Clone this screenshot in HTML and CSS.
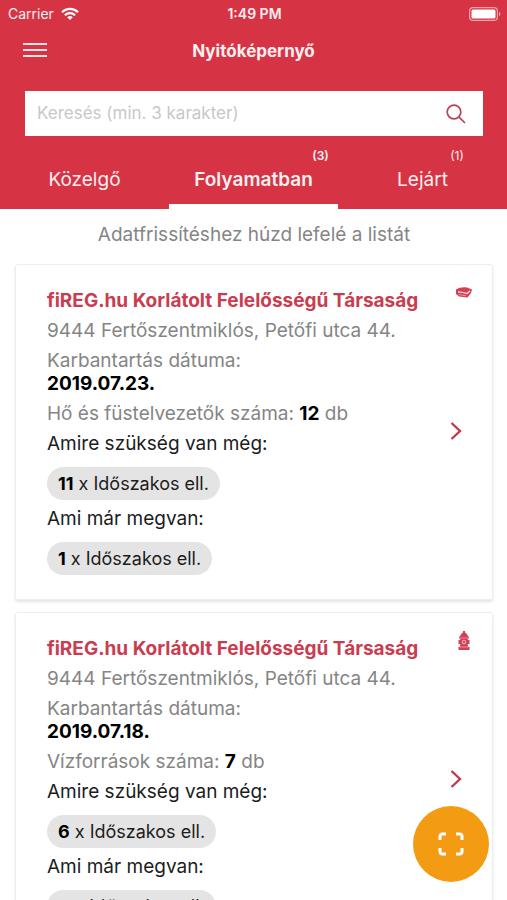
FILE: index.html
```html
<!DOCTYPE html>
<html lang="hu">
<head>
<meta charset="utf-8">
<meta name="viewport" content="width=device-width, initial-scale=1">
<title>Nyitóképernyő</title>
<link rel="stylesheet" href="styles.css">
</head>
<body>
<header class="header">
  <div class="status">
    <span class="carrier">Carrier
      <svg class="wifi" width="18" height="14" viewBox="0 0 18 14" fill="none" stroke="#fff" stroke-width="2.2"><path d="M1 5.2a11.4 11.4 0 0 1 16 0M3.9 8.2a7.3 7.3 0 0 1 10.200 0"/><path d="M9 13 6.200 10.300a4 4 0 0 1 5.600 0z" fill="#fff" stroke="none"/></svg>
    </span>
    <span class="time">1:49 PM</span>
    <svg class="battery" width="32" height="14" viewBox="0 0 32 14"><rect x=".6" y=".6" width="27.800" height="12.800" rx="3.500" fill="none" stroke="#f0a3aa" stroke-width="1.200"/><rect x="2.500" y="2.500" width="24" height="9" rx="1.500" fill="#fff"/><path d="M30 5v4q1.500-.6 1.500-2T30 5z" fill="#f0a3aa"/></svg>
  </div>
  <div class="navbar">
    <button class="icon-button" type="button" aria-label="Menü"><svg width="24" height="16" viewBox="0 0 24 16" stroke="#fbe3e5" stroke-width="2"><path d="M0 1h24M0 7h24M0 13h24"/></svg></button>
    <h1 class="title">Nyitóképernyő</h1>
  </div>
  <form class="search">
    <input class="search-input" type="text" placeholder="Keresés (min. 3 karakter)" aria-label="Keresés">
    <button class="icon-button" type="button" aria-label="Keresés indítása"><svg width="20" height="20" viewBox="0 0 20 20" fill="none" stroke="#b84358" stroke-width="1.700"><circle cx="8" cy="8" r="6.800"/><path d="m12.800 12.800 6.200 6.200"/></svg></button>
  </form>
  <nav class="tabs">
    <a class="tab" href="#kozelgo"><span class="tab-label">Közelgő</span></a>
    <a class="tab tab-active" href="#folyamatban"><span class="tab-label">Folyamatban<span class="count">(3)</span></span></a>
    <a class="tab" href="#lejart"><span class="tab-label">Lejárt<span class="count">(1)</span></span></a>
  </nav>
</header>
<main class="list">
  <p class="hint">Adatfrissítéshez húzd lefelé a listát</p>
  <article class="card">
    <div class="info">
      <h2 class="name">fiREG.hu Korlátolt Felelősségű Társaság</h2>
      <p class="muted">9444 Fertőszentmiklós, Petőfi utca 44.</p>
      <div class="muted">Karbantartás dátuma:<br><b>2019.07.23.</b></div>
      <p class="muted">Hő és füstelvezetők száma: <b>12</b> db</p>
      <p>Amire szükség van még:</p>
      <span class="pill"><b>11</b> x Időszakos ell.</span>
      <p>Ami már megvan:</p>
      <span class="pill"><b>1</b> x Időszakos ell.</span>
    </div>
    <div class="side">
      <svg class="type" width="18" height="20" viewBox="0 0 18 20"><path d="M1 6.500Q5 3.800 12 4.500L17 6.500 16 10 12.500 14.500 4 13.500 1 11z" fill="#d43f53"/><path d="M3 8.800 8 9.500 12 10.500 15 8" fill="none" stroke="#fbe6e8" stroke-width="1.200"/><path d="M3.500 11.500 11 12.800" fill="none" stroke="#eda8b1" stroke-width=".8"/></svg>
      <a class="open" href="#1" aria-label="Megnyitás"><svg width="12" height="20" viewBox="0 0 12 20" fill="none" stroke="#bd3b50" stroke-width="2.400"><path d="m1.500 2 8.500 8-8.500 8"/></svg></a>
    </div>
  </article>
  <article class="card">
    <div class="info">
      <h2 class="name">fiREG.hu Korlátolt Felelősségű Társaság</h2>
      <p class="muted">9444 Fertőszentmiklós, Petőfi utca 44.</p>
      <div class="muted">Karbantartás dátuma:<br><b>2019.07.18.</b></div>
      <p class="muted">Vízforrások száma: <b>7</b> db</p>
      <p>Amire szükség van még:</p>
      <span class="pill"><b>6</b> x Időszakos ell.</span>
      <p>Ami már megvan:</p>
      <span class="pill"><b>2</b> x Időszakos ell.</span>
    </div>
    <div class="side">
      <svg class="type" width="18" height="20" viewBox="0 0 18 20" fill="#d43f53"><path d="M8 0h2v1.500Q12.500 2.500 13 5.500h.8V7.500H12.800V9H14.500v4h-1.700v3H14.500V19H3.500V16H5.200V13H3.500V9H5.200V7.500H4.200V5.500H5Q5.500 2.500 8 1.500z"/><circle cx="9" cy="11" r="1.800" fill="none" stroke="#f6c5cb" stroke-width="1"/><path d="M5.200 7h7.600M5.200 16h7.600" stroke="#f0a3aa" stroke-width=".8"/></svg>
      <a class="open" href="#2" aria-label="Megnyitás"><svg width="12" height="20" viewBox="0 0 12 20" fill="none" stroke="#bd3b50" stroke-width="2.400"><path d="m1.500 2 8.500 8-8.500 8"/></svg></a>
    </div>
  </article>
</main>
<button class="scan" type="button" aria-label="Beolvasás"><svg width="26" height="24" viewBox="0 0 26 24" fill="none" stroke="#fff" stroke-width="3"><path d="M2 8V4.500Q2 2 4.500 2H8M18 2h3.500Q24 2 24 4.500V8M24 16v3.500Q24 22 21.500 22H18M8 22H4.500Q2 22 2 19.500V16"/></svg></button>
</body>
</html>
```
FILE: styles.css
```css
* { box-sizing: border-box; }

body {
  margin: 0;
  height: 100vh;
  display: flex;
  flex-direction: column;
  overflow: hidden;
  background: #fff;
  color: #1c1c1c;
  font: 19px/23px Inter, "Liberation Sans", sans-serif;
}

h1, h2, p { margin: 0; }
b { color: #000; }

.header {
  flex: none;
  background: #d63445;
  color: #fdeff0;
}

.status {
  display: grid;
  grid-template-columns: 1fr auto 1fr;
  align-items: center;
  height: 27px;
  padding: 0 6px 0 8px;
  font-size: 14px;
}
.carrier { display: flex; align-items: center; gap: 7px; }
.time { font-weight: 600; }
.battery { justify-self: end; }

.navbar {
  display: grid;
  grid-template-columns: 1fr auto 1fr;
  align-items: center;
  height: 48px;
  padding: 0 23px;
}
.title { font-size: 17px; font-weight: 700; }

.icon-button {
  display: flex;
  padding: 0;
  border: 0;
  background: none;
  cursor: pointer;
}

.search {
  display: flex;
  align-items: center;
  height: 45px;
  margin: 16px 24px 0 25px;
  padding: 0 17px 0 12px;
  background: #fff;
}
.search-input {
  flex: 1;
  min-width: 0;
  padding: 0;
  border: 0;
  outline: 0;
  background: none;
  font: inherit;
  font-size: 17px;
}
.search-input::placeholder { color: #c8c8c8; opacity: 1; }

.tabs {
  display: grid;
  grid-template-columns: repeat(3, 1fr);
  height: 73px;
}
.tab {
  padding-top: 32px;
  border-bottom: 5px solid transparent;
  color: inherit;
  text-align: center;
  text-decoration: none;
}
.tab-active { border-color: #fff; font-weight: 600; }
.tab-label { position: relative; }
.count {
  position: absolute;
  right: -16px;
  top: -24px;
  font-size: 12px;
}

.list {
  flex: 1;
  min-height: 0;
  overflow-y: auto;
  scrollbar-width: none;
  padding: 14px 14px 0 15px;
}
.hint { margin-bottom: 18px; color: #858585; text-align: center; }

.card {
  display: flex;
  justify-content: space-between;
  margin-bottom: 12px;
  padding: 24px 19px 24px 31px;
  border: 1px solid #eee;
  border-radius: 3px;
  box-shadow: 0 2px 3px #e4e4e4;
}
.info {
  display: flex;
  flex-direction: column;
  align-items: flex-start;
  gap: 7px;
}
.name { color: #c93d50; font-size: 19px; font-weight: 700; }
.muted { color: #858585; }
.pill {
  margin-top: 5px;
  padding: 0 11px;
  border-radius: 17px;
  background: #e4e4e4;
  font-size: 18px;
  line-height: 33px;
}

.side {
  display: flex;
  flex-direction: column;
  align-items: flex-end;
}
.type { margin-top: -6px; }
.open { margin: 118px 11px 0 0; }
.open svg { display: block; }

.scan {
  position: fixed;
  right: 18px;
  bottom: 18px;
  display: flex;
  align-items: center;
  justify-content: center;
  width: 76px;
  height: 76px;
  padding: 0;
  border: 0;
  border-radius: 50%;
  background: #f39b13;
  cursor: pointer;
}
```
